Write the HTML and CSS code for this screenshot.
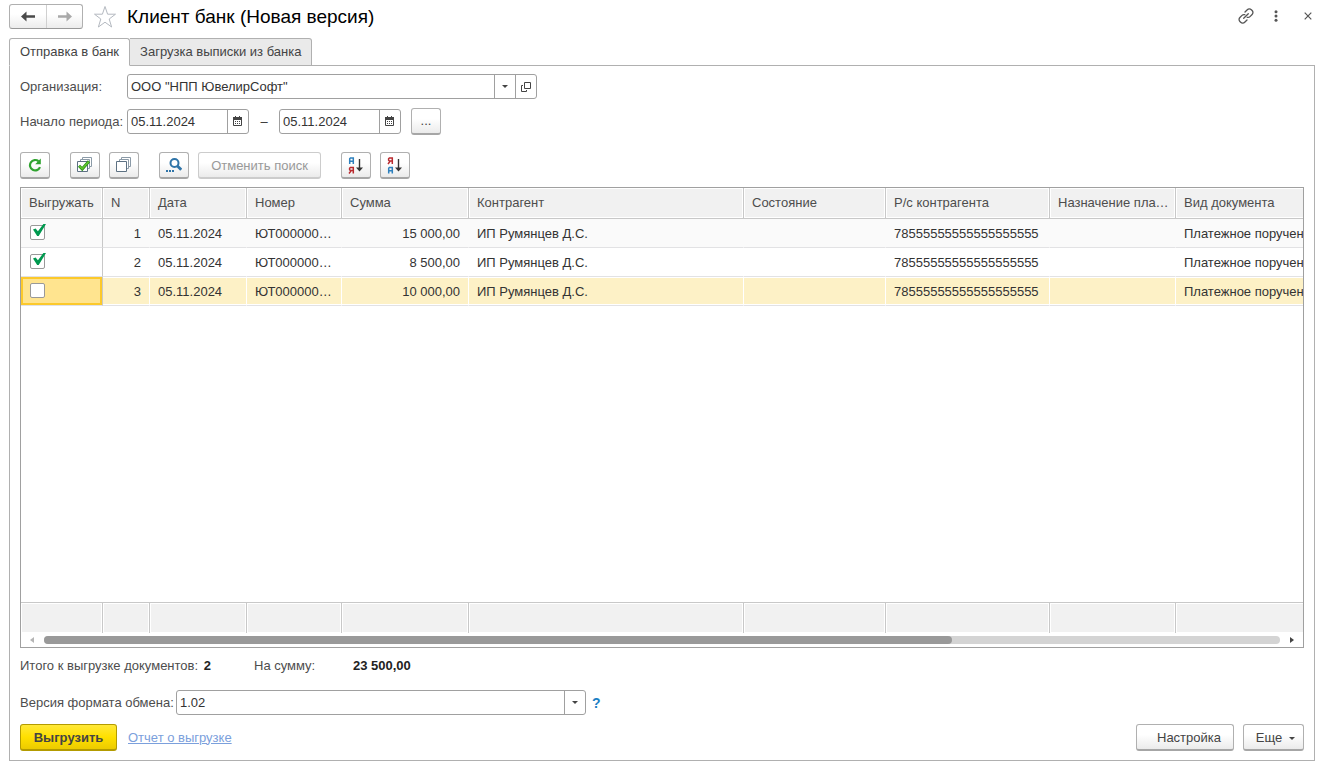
FILE: index.html
```html
<!DOCTYPE html>
<html lang="ru">
<head>
<meta charset="utf-8">
<meta name="viewport" content="width=device-width, initial-scale=1">
<title>Клиент банк (Новая версия)</title>
<link rel="stylesheet" href="styles.css">
</head>
<body>
<header class="titlebar">
  <div class="history">
    <button type="button" class="history-btn" aria-label="Назад"><svg width="14" height="11" viewBox="0 0 14 11"><path d="M0 5.500 5.500.5v3.700H14v2.600H5.500v3.700z" fill="#4a4a4a"/></svg></button>
    <button type="button" class="history-btn" aria-label="Вперед"><svg width="14" height="11" viewBox="0 0 14 11"><path d="M14 5.500 8.500.5v3.700H0v2.600h8.500v3.700z" fill="#a9a9a9"/></svg></button>
  </div>
  <button type="button" class="plain-btn star" aria-label="В избранное"><svg width="24" height="24" viewBox="0 0 24 24"><path d="M12 1.500 14.600 9.200H22.500L16.200 14 18.600 22 12 17.200 5.400 22 7.800 14 1.500 9.200H9.400Z" fill="#fff" stroke="#b4b9c0" stroke-width="1"/></svg></button>
  <h1 class="title">Клиент банк (Новая версия)</h1>
  <div class="window-tools">
    <button type="button" class="plain-btn" aria-label="Получить ссылку"><svg width="16" height="16" viewBox="0 0 16 16" fill="none" stroke="#555" stroke-width="1.300" stroke-linecap="round"><path d="M7 4 9.300 1.700a2.800 2.800 0 0 1 4 0l.8.8a2.800 2.800 0 0 1 0 4L12 8.600a2.800 2.800 0 0 1-2.800.7M9 12l-2.300 2.300a2.800 2.800 0 0 1-4 0l-.8-.8a2.800 2.800 0 0 1 0-4L4 7.400a2.800 2.800 0 0 1 2.800-.7M5.700 10.300l4.600-4.600"/></svg></button>
    <button type="button" class="plain-btn menu" aria-label="Меню"><svg width="4" height="12" viewBox="0 0 4 12" fill="#555"><circle cx="2" cy="1.700" r="1.500"/><circle cx="2" cy="6" r="1.500"/><circle cx="2" cy="10.300" r="1.500"/></svg></button>
    <button type="button" class="plain-btn close" aria-label="Закрыть"><svg width="8" height="8" viewBox="0 0 8 8"><path d="M.7.7l6.600 6.600M7.300.7.7 7.300" stroke="#555" stroke-width="1.200"/></svg></button>
  </div>
</header>

<nav class="tabs" role="tablist">
  <button type="button" class="tab tab-active" role="tab" aria-selected="true">Отправка в банк</button>
  <button type="button" class="tab" role="tab" aria-selected="false">Загрузка выписки из банка</button>
</nav>

<main class="panel">
  <div class="form-row">
    <label class="label" for="org">Организация:</label>
    <div class="field field-wide">
      <input id="org" type="text" value='ООО "НПП ЮвелирСофт"'>
      <button type="button" class="field-btn" aria-label="Выбрать"><svg width="6" height="3" viewBox="0 0 6 3"><path d="M0 0h6L3 3z" fill="#444"/></svg></button>
      <button type="button" class="field-btn" aria-label="Открыть"><svg width="10" height="10" viewBox="0 0 10 10" fill="none" stroke="#444"><path d="M3.500.5h6v6h-6zM2 3.500H.5v6h5V8"/></svg></button>
    </div>
  </div>
  <div class="form-row period">
    <label class="label" for="from">Начало периода:</label>
    <div class="field field-date">
      <input id="from" type="text" value="05.11.2024">
      <button type="button" class="field-btn" aria-label="Календарь"><svg width="10" height="11" viewBox="0 0 10 11"><path d="M.5 1.500h8v8h-8z" fill="#fff" stroke="#444"/><path d="M0 1h9v3H0zM2 0h1v2H2zM6 0h1v2H6zM2 5h1v1H2zM4 5h1v1H4zM6 5h1v1H6zM2 7h1v1H2zM4 7h1v1H4zM6 7h1v1H6z" fill="#444"/></svg></button>
    </div>
    <span class="dash">–</span>
    <div class="field field-date">
      <input type="text" value="05.11.2024" aria-label="Конец периода">
      <button type="button" class="field-btn" aria-label="Календарь"><svg width="10" height="11" viewBox="0 0 10 11"><path d="M.5 1.500h8v8h-8z" fill="#fff" stroke="#444"/><path d="M0 1h9v3H0zM2 0h1v2H2zM6 0h1v2H6zM2 5h1v1H2zM4 5h1v1H4zM6 5h1v1H6zM2 7h1v1H2zM4 7h1v1H4zM6 7h1v1H6z" fill="#444"/></svg></button>
    </div>
    <button type="button" class="btn btn-icon btn-dots">...</button>
  </div>

  <div class="toolbar">
    <div class="group">
      <button type="button" class="btn btn-icon" aria-label="Обновить"><svg width="14" height="14" viewBox="0 0 14 14"><path d="M12 9.200A5.200 5.200 0 1 1 10.500 3.200" fill="none" stroke="#2fa32f" stroke-width="2.200"/><path d="M12.800.5v5.700H7.200z" fill="#2fa32f"/></svg></button>
    </div>
    <div class="group">
      <button type="button" class="btn btn-icon" aria-label="Установить флажки"><svg width="16" height="16" viewBox="0 0 16 16" fill="#fff" stroke="#5d7183"><path d="M5.500.5h9v9h-9z" stroke="#8b9aa7"/><path d="M3.500 2.500h9v9h-9z" stroke="#8b9aa7"/><path d="M.5 4.500h10v10H.5z"/><path d="M2 8.800 5.200 12 12 4.200" fill="none" stroke="#268b18" stroke-width="3"/><path d="M2.400 9.200 5.200 11.900 11.700 4.600" fill="none" stroke="#60c52c" stroke-width="1.600"/></svg></button>
      <button type="button" class="btn btn-icon" aria-label="Снять флажки"><svg width="16" height="16" viewBox="0 0 16 16" fill="#fff" stroke="#5d7183"><path d="M5.500.5h9v9h-9z" stroke="#8b9aa7"/><path d="M3.500 2.500h9v9h-9z" stroke="#8b9aa7"/><path d="M.5 4.500h10v10H.5z"/></svg></button>
    </div>
    <div class="group">
      <button type="button" class="btn btn-icon" aria-label="Найти"><svg width="16" height="14" viewBox="0 0 16 14"><circle cx="8.500" cy="5" r="4" fill="#fff" stroke="#2f74a8" stroke-width="2"/><path d="m11.200 7.800 4 4" stroke="#2f74a8" stroke-width="2.800"/><path d="M0 12h2v2H0zM3 12h2v2H3zM6 12h2v2H6z" fill="#2f74a8"/></svg></button>
      <button type="button" class="btn btn-text btn-cancel" disabled>Отменить поиск</button>
    </div>
    <div class="group">
      <button type="button" class="btn btn-icon" aria-label="По возрастанию"><svg width="16" height="17" viewBox="0 0 16 17" fill="none"><path d="M1.700 7V1.700L2.400 1h2.900V7M1.700 4.300h3.600" stroke="#2e80bd" stroke-width="1.500"/><path d="M5.300 16.500v-6H2.400l-.8.800v1.500l.8.800h2.900M3.200 13.600 1 16.500" stroke="#b92a2f" stroke-width="1.500"/><path d="M11.500 2v10" stroke="#333" stroke-width="1.400"/><path d="M8 10.500h7L11.500 14.500z" fill="#333"/></svg></button>
      <button type="button" class="btn btn-icon" aria-label="По убыванию"><svg width="16" height="17" viewBox="0 0 16 17" fill="none"><path d="M5.300 7V1H2.400l-.8.800v1.500l.8.800h2.900M3.200 4.100 1 7" stroke="#b92a2f" stroke-width="1.500"/><path d="M1.700 16.500v-5.300l.7-.7h2.900v6M1.700 13.800h3.600" stroke="#2e80bd" stroke-width="1.500"/><path d="M11.500 2v10" stroke="#333" stroke-width="1.400"/><path d="M8 10.500h7L11.500 14.500z" fill="#333"/></svg></button>
    </div>
  </div>

  <section class="list">
    <div class="list-view">
      <table class="grid">
        <colgroup><col class="c-check"><col class="c-n"><col class="c-date"><col class="c-num"><col class="c-sum"><col class="c-agent"><col class="c-state"><col class="c-acc"><col class="c-purpose"><col class="c-kind"></colgroup>
        <thead>
          <tr><th>Выгружать</th><th>N</th><th>Дата</th><th>Номер</th><th>Сумма</th><th>Контрагент</th><th>Состояние</th><th>Р/с контрагента</th><th>Назначение платежа</th><th>Вид документа</th></tr>
        </thead>
        <tbody>
          <tr class="row odd"><td><input type="checkbox" class="check" aria-label="Выгружать 1" checked></td><td class="num">1</td><td>05.11.2024</td><td>ЮТ00000001</td><td class="num">15 000,00</td><td>ИП Румянцев Д.С.</td><td></td><td>78555555555555555555</td><td></td><td>Платежное поручение</td></tr>
          <tr class="row"><td><input type="checkbox" class="check" aria-label="Выгружать 2" checked></td><td class="num">2</td><td>05.11.2024</td><td>ЮТ00000002</td><td class="num">8 500,00</td><td>ИП Румянцев Д.С.</td><td></td><td>78555555555555555555</td><td></td><td>Платежное поручение</td></tr>
          <tr class="row selected"><td class="current"><input type="checkbox" class="check" aria-label="Выгружать 3"></td><td class="num">3</td><td>05.11.2024</td><td>ЮТ00000003</td><td class="num">10 000,00</td><td>ИП Румянцев Д.С.</td><td></td><td>78555555555555555555</td><td></td><td>Платежное поручение</td></tr>
          <tr class="filler"><td colspan="10"></td></tr>
        </tbody>
        <tfoot>
          <tr><td></td><td></td><td></td><td></td><td></td><td></td><td></td><td></td><td></td><td></td></tr>
        </tfoot>
      </table>
    </div>
    <div class="scroll">
      <svg width="4" height="6" viewBox="0 0 4 6"><path d="M4 0v6L0 3z" fill="#b5b5b5"/></svg>
      <div class="track"><div class="thumb"></div></div>
      <svg width="4" height="6" viewBox="0 0 4 6"><path d="M0 0v6l4-3z" fill="#444"/></svg>
    </div>
  </section>

  <div class="totals">
    <span class="total-docs">Итого к выгрузке документов: <b>2</b></span>
    <span class="total-label">На сумму:</span>
    <b>23 500,00</b>
  </div>

  <div class="form-row version">
    <label class="label-inline" for="ver">Версия формата обмена:</label>
    <div class="field field-wide field-select">
      <select id="ver"><option>1.02</option></select>
      <span class="field-btn select-arrow"><svg width="6" height="3" viewBox="0 0 6 3"><path d="M0 0h6L3 3z" fill="#444"/></svg></span>
    </div>
    <button type="button" class="plain-btn help">?</button>
  </div>

  <footer class="actions">
    <button type="button" class="btn btn-text btn-primary">Выгрузить</button>
    <a class="report" href="#">Отчет о выгрузке</a>
    <button type="button" class="btn btn-text btn-settings">Настройка</button>
    <button type="button" class="btn btn-text btn-more">Еще<svg width="6" height="3" viewBox="0 0 6 3"><path d="M0 0h6L3 3z" fill="#444"/></svg></button>
  </footer>
</main>
</body>
</html>
```
FILE: styles.css
```css
* { box-sizing: border-box; }

body {
  margin: 0;
  height: 100vh;
  padding: 4px 4px 5px 9px;
  display: flex;
  flex-direction: column;
  background: #fff;
  color: #333;
  font: 13px/16px "Liberation Sans", Arial, sans-serif;
}

button, input, select { font: inherit; color: inherit; margin: 0; }
svg { display: block; flex: none; }

/* Title bar */
.titlebar { display: flex; align-items: center; height: 25px; flex: none; }
.history {
  display: flex;
  height: 25px;
  border: 1px solid #b0b0b0;
  border-bottom-color: #989898;
  border-radius: 3px;
  background: linear-gradient(#fff 40%, #ececec);
}
.history-btn {
  width: 36px;
  padding: 0;
  border: 0;
  background: none;
  display: flex;
  align-items: center;
  justify-content: center;
}
.history-btn + .history-btn { border-left: 1px solid #d0d0d0; }
.plain-btn { border: 0; padding: 0; background: none; }
.star { margin: 0 10px; }
.title { margin: 0; font-size: 19px; line-height: 24px; font-weight: 400; color: #000; }
.window-tools { margin: 0 3px 2px auto; display: flex; align-items: center; }
.menu { margin: 0 26px 0 20px; }

/* Tabs */
.tabs { display: flex; flex: none; margin-top: 9px; position: relative; }
.tab {
  height: 28px;
  padding: 0 10px;
  border: 1px solid #b0b0b0;
  border-left: 0;
  border-radius: 0 3px 0 0;
  background: #eaeaea;
  color: #444;
  margin-bottom: -1px;
}
.tab-active {
  border-left: 1px solid #b0b0b0;
  border-bottom-color: #fff;
  border-radius: 3px 3px 0 0;
  background: #fff;
}
.panel {
  flex: 1;
  min-height: 0;
  display: flex;
  flex-direction: column;
  border: 1px solid #b0b0b0;
  padding: 8px 10px 9px;
}

/* Fields */
.form-row { display: flex; align-items: center; flex: none; }
.label { width: 107px; color: #4d4d4d; white-space: nowrap; }
.label-inline { width: 156px; color: #4d4d4d; white-space: nowrap; }
.field {
  display: flex;
  height: 25px;
  border: 1px solid #a0a0a0;
  border-radius: 3px;
  background: #fff;
}
.field input, .field select {
  flex: 1;
  min-width: 0;
  border: 0;
  outline: 0;
  padding: 0 3px;
  background: none;
  appearance: none;
}
.field-wide { width: 410px; }
.field-date { width: 122px; }
.field-btn {
  width: 21px;
  padding: 0;
  border: 0;
  border-left: 1px solid #a0a0a0;
  background: none;
  display: flex;
  align-items: center;
  justify-content: center;
}
.field-select { display: grid; grid-template-columns: 1fr 21px; }
.field-select select { grid-area: 1 / 1 / 2 / 3; }
.select-arrow { grid-area: 1 / 2; pointer-events: none; }
.period { margin-top: 9px; }
.dash { width: 30px; text-align: center; }

/* Buttons */
.btn {
  height: 27px;
  padding: 0;
  border: 1px solid #b0b0b0;
  border-bottom: 2px solid #a6a6a6;
  border-radius: 3px;
  background: linear-gradient(#fff 40%, #ebebeb);
  color: #444;
  display: flex;
  align-items: center;
  justify-content: center;
  white-space: nowrap;
}
.btn-text { padding-top: 2px; }
.btn-icon { width: 30px; }
.btn-dots { margin-left: 10px; }
.btn-cancel { width: 123px; color: #999; border-color: #ccc; }
.toolbar { display: flex; gap: 20px; margin: 17px 0 8px; flex: none; }
.group { display: flex; gap: 9px; }

/* List */
.list {
  flex: 1;
  min-height: 0;
  display: flex;
  flex-direction: column;
  border: 1px solid #a0a0a0;
}
.list-view { flex: 1; min-height: 0; overflow: hidden; }
.grid {
  width: 1745px;
  height: 100%;
  table-layout: fixed;
  border-collapse: separate;
  border-spacing: 0;
}
.c-check { width: 82px; }
.c-n { width: 47px; }
.c-date { width: 97px; }
.c-num { width: 95px; }
.c-sum { width: 127px; }
.c-agent { width: 275px; }
.c-state { width: 142px; }
.c-acc { width: 164px; }
.c-purpose { width: 126px; }
.grid th, .grid td {
  padding: 0 8px;
  overflow: hidden;
  text-overflow: ellipsis;
  white-space: nowrap;
  text-align: left;
  font-weight: 400;
}
.grid th, .grid tfoot td {
  background: #f1f1f1;
  border-right: 1px solid #c8c8c8;
  box-shadow: inset 0 0 0 1px #fff;
  color: #4d4d4d;
}
.grid th { height: 31px; padding-right: 4px; border-bottom: 1px solid #c8c8c8; }
.grid tfoot td { height: 31px; border-top: 1px solid #c8c8c8; }
.grid .row td {
  height: 29px;
  padding-top: 2px;
  border-bottom: 1px solid #e2e2e4;
  border-right: 1px solid transparent;
}
.grid .row td:first-child {
  padding: 0 0 0 8px;
  border-right-color: #c8c8c8;
  overflow: visible;
}
.grid .num { text-align: right; }
.odd td { background: #fafafa; }
.grid .selected td { background: #fdf1c6; border-right-color: #fff; box-shadow: inset 0 1px #fff, inset 0 -1px #fff; }
.grid .selected .current { background: #ffe48f; box-shadow: inset 0 0 0 2px #fcc92b; }
.check {
  appearance: none;
  display: block;
  width: 15px;
  height: 15px;
  margin: 0 0 1px 1px;
  border: 1px solid #999;
  border-radius: 2px;
  background: #fff;
  position: relative;
}
.check:checked::after {
  content: "";
  position: absolute;
  left: 2px;
  top: -2px;
  width: 13px;
  height: 12px;
  background: #00994f;
  clip-path: polygon(0 46%, 20% 38%, 38% 60%, 80% 0, 100% 0, 44% 100%, 32% 100%);
}
.scroll { display: flex; align-items: center; gap: 10px; height: 14px; padding: 0 9px; flex: none; }
.track { flex: 1; height: 8px; border-radius: 4px; background: #d4d4d4; }
.thumb { width: 73.5%; height: 8px; border-radius: 4px; background: #999; }

/* Footer */
.totals { display: flex; flex: none; margin: 10px 0 16px; color: #4d4d4d; }
.totals b { color: #222; }
.total-docs { width: 234px; }
.total-docs b { margin-left: 2px; }
.total-label { width: 99px; }
.help { margin-left: 6px; color: #1b7fc4; font-size: 14px; font-weight: 700; }
.actions { display: flex; align-items: center; margin-top: 9px; flex: none; }
.btn-primary {
  width: 97px;
  border-color: #b39b00;
  background: linear-gradient(#ffe838, #ffe000 50%, #eccb00);
  font-weight: 700;
}
.report { margin-left: 11px; color: #7ba0dc; }
.btn-settings { width: 98px; margin-left: auto; padding-left: 8px; }
.btn-more { width: 61px; margin-left: 9px; padding-left: 4px; gap: 7px; }
```
